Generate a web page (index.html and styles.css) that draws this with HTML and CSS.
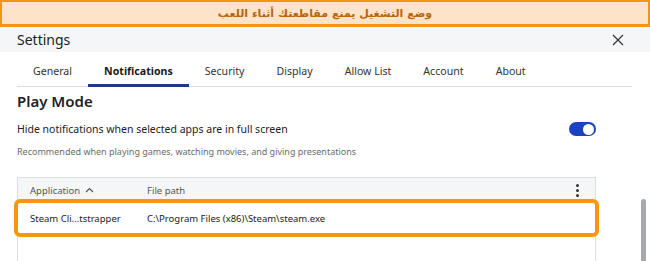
FILE: index.html
```html
<!DOCTYPE html>
<html lang="en">
<head>
    <meta charset="UTF-8">
    <meta name="viewport" content="width=device-width, initial-scale=1.0">
    <title>Settings</title>
    <link rel="stylesheet" href="styles.css">
</head>
<body>
    <div class="banner" dir="rtl" lang="ar">وضع التشغيل يمنع مقاطعتك أثناء اللعب</div>

    <div class="header">
        <span class="header__title">Settings</span>
        <svg class="header__close" width="12" height="12" viewBox="0 0 12 12">
            <path d="M1 1 L11 11 M11 1 L1 11" stroke="#3a3a3a" stroke-width="1.3" fill="none"/>
        </svg>
    </div>

    <div class="tabs">
        <span class="tab">General</span>
        <span class="tab tab--active">Notifications</span>
        <span class="tab">Security</span>
        <span class="tab">Display</span>
        <span class="tab">Allow List</span>
        <span class="tab">Account</span>
        <span class="tab">About</span>
    </div>

    <div class="content">
        <h2 class="section-title">Play Mode</h2>
        <div class="option">
            <span class="option__label">Hide notifications when selected apps are in full screen</span>
            <span class="toggle"><span class="toggle__knob"></span></span>
        </div>
        <p class="option__hint">Recommended when playing games, watching movies, and giving presentations</p>

        <div class="table">
            <div class="table__head">
                <span class="col col--app">Application
                    <svg width="9" height="6" viewBox="0 0 9 6"><path d="M1 5 L4.5 1.5 L8 5" stroke="#555" stroke-width="1.2" fill="none"/></svg>
                </span>
                <span class="col">File path</span>
                <span class="kebab"><i></i><i></i><i></i></span>
            </div>
            <div class="table__row">
                <span class="col col--app">Steam Cli...tstrapper</span>
                <span class="col">C:\Program Files (x86)\Steam\steam.exe</span>
            </div>
        </div>
    </div>

    <div class="scrollbar"></div>
</body>
</html>
```

FILE: styles.css
```css
body{
    margin: 0;
    width: 650px;
    height: 261px;
    overflow: hidden;
    position: relative;
    background-color: #fff;
    font-family: "Noto Sans", "Open Sans", sans-serif;
    color: #222;
}
.banner{
    box-sizing: border-box;
    height: 27px;
    border: 2px solid #f2950f;
    border-bottom-width: 3px;
    background-color: #fde3c7;
    color: #b8660f;
    font-family: "DejaVu Sans", sans-serif;
    font-weight: bold;
    font-size: 11px;
    display: flex;
    justify-content: center;
    align-items: center;
}
.header{
    height: 25px;
    background-color: #f5f6f7;
    display: flex;
    justify-content: space-between;
    align-items: center;
    padding: 0 26px 0 17px;
}
.header__title{
    font-size: 14px;
}
.tabs{
    display: flex;
    margin: 0 18px 0 17px;
    border-bottom: 1px solid #dcdfe2;
    height: 35px;
    box-sizing: border-box;
}
.tab{
    padding: 12px 16px 0;
    font-size: 10.6px;
    color: #333;
    border-bottom: 3px solid transparent;
    margin-bottom: -1px;
}
.tab--active{
    font-weight: bold;
    color: #1a1a1a;
    border-bottom-color: #1b3a8c;
}
.content{
    padding: 0 54px 0 17px;
}
.section-title{
    margin: 4px 0 0;
    font-size: 15px;
    font-weight: 600;
    line-height: 20px;
}
.option{
    display: flex;
    justify-content: space-between;
    align-items: center;
    margin-top: 11px;
}
.option__label{
    font-size: 10.5px;
}
.toggle{
    width: 27px;
    height: 14px;
    border-radius: 7px;
    background-color: #1a43c2;
    display: flex;
    justify-content: flex-end;
    align-items: center;
    padding: 0 2px;
    box-sizing: border-box;
}
.toggle__knob{
    width: 11px;
    height: 11px;
    border-radius: 50%;
    background-color: #fff;
}
.option__hint{
    margin: 9px 0 0;
    font-size: 9px;
    color: #6b6b6b;
}
.table{
    margin-top: 19px;
    border: 1px solid #dcdfe2;
    border-bottom: none;
    height: 90px;
}
.table__head{
    display: flex;
    align-items: center;
    height: 24px;
    background-color: #f5f6f7;
    font-size: 9.5px;
    color: #555;
}
.col{
    padding-left: 12px;
}
.col--app{
    width: 105px;
    display: flex;
    align-items: center;
    gap: 5px;
}
.kebab{
    margin-left: auto;
    margin-right: 16px;
    display: flex;
    flex-direction: column;
    gap: 2px;
}
.kebab i{
    width: 3px;
    height: 3px;
    border-radius: 50%;
    background-color: #333;
}
.table__row{
    display: flex;
    align-items: center;
    height: 30px;
    margin-top: 1px;
    font-size: 9.5px;
    color: #222;
    outline: 4px solid #f5970f;
    outline-offset: 0;
    border-radius: 2px;
}
.scrollbar{
    position: absolute;
    left: 641px;
    top: 199px;
    width: 5px;
    height: 70px;
    border-radius: 3px;
    background-color: #a6aaae;
}
```
